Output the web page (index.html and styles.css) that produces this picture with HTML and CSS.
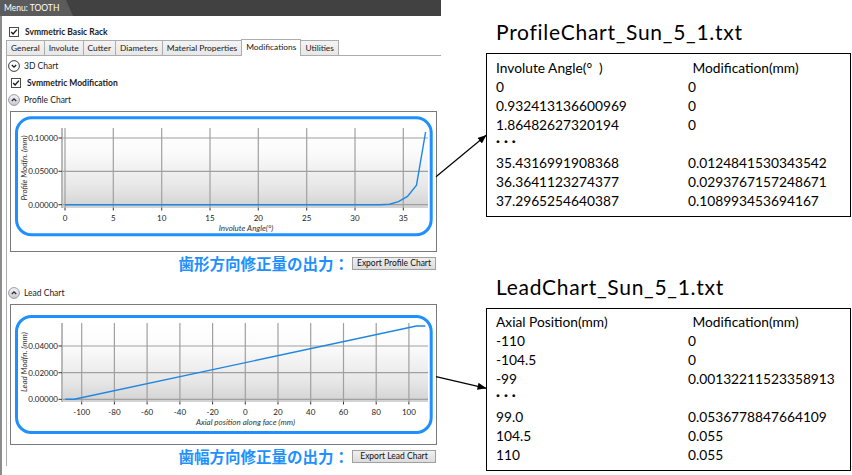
FILE: index.html
```html
<!DOCTYPE html>
<html lang="ja">
<head>
<meta charset="utf-8">
<title>TOOTH - Modifications</title>
<link rel="stylesheet" href="styles.css">
</head>
<body>
<div class="page">
  <section class="panel">
    <div class="menubar"><div class="menutab">Menu: TOOTH</div></div>
    <div class="panel-body">
      <div class="check-row top-check">
        <svg class="cb" width="10" height="10" viewBox="0 0 10 10"><rect x="0.5" y="0.5" width="9" height="9" fill="#fff" stroke="#4a4a4a"/><path d="M2.2 5 L4.1 7 L7.9 2.6" fill="none" stroke="#1a1a1a" stroke-width="1.4"/></svg>
        <span class="b">Svmmetric Basic Rack</span>
      </div>
      <div class="tabs">
        <span class="tab">General</span>
        <span class="tab">Involute</span>
        <span class="tab">Cutter</span>
        <span class="tab">Diameters</span>
        <span class="tab">Material Properties</span>
        <span class="tab active">Modifications</span>
        <span class="tab">Utilities</span>
      </div>
      <div class="tab-content">
        <div class="exp-row r3d">
          <svg class="exp" width="12" height="12" viewBox="0 0 12 12"><circle cx="6" cy="6" r="5.4" fill="#fff" stroke="#3a3a3a"/><path d="M3.8 5 L6 7.2 L8.2 5" fill="none" stroke="#1a1a1a" stroke-width="1.3"/></svg>
          <span>3D Chart</span>
        </div>
        <div class="check-row mod-check">
          <svg class="cb" width="10" height="10" viewBox="0 0 10 10"><rect x="0.5" y="0.5" width="9" height="9" fill="#fff" stroke="#4a4a4a"/><path d="M2.2 5 L4.1 7 L7.9 2.6" fill="none" stroke="#1a1a1a" stroke-width="1.4"/></svg>
          <span class="b">Svmmetric Modification</span>
        </div>
        <div class="exp-row">
          <svg class="exp" width="12" height="12" viewBox="0 0 12 12"><defs><linearGradient id="eg1" x1="0" y1="0" x2="0" y2="1"><stop offset="0" stop-color="#f4f4f8"/><stop offset="1" stop-color="#c8c8d2"/></linearGradient></defs><circle cx="6" cy="6" r="5.4" fill="url(#eg1)" stroke="#9a9aa6"/><path d="M3.8 7 L6 4.8 L8.2 7" fill="none" stroke="#2a2a2a" stroke-width="1.3"/></svg>
          <span>Profile Chart</span>
        </div>
        <div class="chart-box">
          <svg width="425" height="139" viewBox="0 0 425 139">
            <defs>
              <linearGradient id="pg1" x1="0" y1="0" x2="0" y2="1">
                <stop offset="0" stop-color="#ffffff"/>
                <stop offset="0.3" stop-color="#fbfbfb"/>
                <stop offset="0.75" stop-color="#e6e6e6"/>
                <stop offset="1" stop-color="#d2d2d2"/>
              </linearGradient>
            </defs>
            <g transform="translate(-11 -112)">
              <rect x="62" y="128" width="366" height="80" fill="url(#pg1)"/>
              <g class="grid">
                <line x1="65" y1="128" x2="65" y2="208"/>
                <line x1="113.3" y1="128" x2="113.3" y2="208"/>
                <line x1="161.7" y1="128" x2="161.7" y2="208"/>
                <line x1="210" y1="128" x2="210" y2="208"/>
                <line x1="258.3" y1="128" x2="258.3" y2="208"/>
                <line x1="306.7" y1="128" x2="306.7" y2="208"/>
                <line x1="355" y1="128" x2="355" y2="208"/>
                <line x1="403.3" y1="128" x2="403.3" y2="208"/>
                <line x1="62" y1="138" x2="428" y2="138"/>
                <line x1="62" y1="171.3" x2="428" y2="171.3"/>
                <line x1="62" y1="204.7" x2="428" y2="204.7"/>
              </g>
              <line class="axis" x1="62" y1="128" x2="62" y2="208"/>
              <g class="ticks">
                <line x1="58.5" y1="138" x2="62" y2="138"/>
                <line x1="58.5" y1="171.3" x2="62" y2="171.3"/>
                <line x1="58.5" y1="204.7" x2="62" y2="204.7"/>
                <line x1="65" y1="208" x2="65" y2="210.5"/>
                <line x1="113.3" y1="208" x2="113.3" y2="210.5"/>
                <line x1="161.7" y1="208" x2="161.7" y2="210.5"/>
                <line x1="210" y1="208" x2="210" y2="210.5"/>
                <line x1="258.3" y1="208" x2="258.3" y2="210.5"/>
                <line x1="306.7" y1="208" x2="306.7" y2="210.5"/>
                <line x1="355" y1="208" x2="355" y2="210.5"/>
                <line x1="403.3" y1="208" x2="403.3" y2="210.5"/>
              </g>
              <g class="tick-lbl" text-anchor="end">
                <text x="58" y="141">0.10000</text>
                <text x="58" y="174.3">0.05000</text>
                <text x="58" y="207.7">0.00000</text>
              </g>
              <g class="tick-lbl" text-anchor="middle">
                <text x="65" y="220.5">0</text>
                <text x="113.3" y="220.5">5</text>
                <text x="161.7" y="220.5">10</text>
                <text x="210" y="220.5">15</text>
                <text x="258.3" y="220.5">20</text>
                <text x="306.7" y="220.5">25</text>
                <text x="355" y="220.5">30</text>
                <text x="403.3" y="220.5">35</text>
              </g>
              <text class="axis-title" x="246" y="231" text-anchor="middle">Involute Angle(°)</text>
              <text class="axis-title" transform="translate(27 168) rotate(-90)" text-anchor="middle">Profile Modfn. (mm)</text>
              <polyline class="data" points="65,204.7 380.4,204.7 389.5,204.2 398.5,201.7 407.5,196.4 416.5,185.1 425.6,132"/>
              <rect class="hl" x="16.5" y="117.8" width="414.7" height="117" rx="15"/>
            </g>
          </svg>
        </div>
        <div class="export-row">
          <span class="note">歯形方向修正量の出力：</span>
          <button class="btn" type="button">Export Profile Chart</button>
        </div>
        <div class="exp-row lead-row">
          <svg class="exp" width="12" height="12" viewBox="0 0 12 12"><defs><linearGradient id="eg2" x1="0" y1="0" x2="0" y2="1"><stop offset="0" stop-color="#f4f4f8"/><stop offset="1" stop-color="#c8c8d2"/></linearGradient></defs><circle cx="6" cy="6" r="5.4" fill="url(#eg2)" stroke="#9a9aa6"/><path d="M3.8 7 L6 4.8 L8.2 7" fill="none" stroke="#2a2a2a" stroke-width="1.3"/></svg>
          <span>Lead Chart</span>
        </div>
        <div class="chart-box">
          <svg width="425" height="139" viewBox="0 0 425 139">
            <defs>
              <linearGradient id="pg2" x1="0" y1="0" x2="0" y2="1">
                <stop offset="0" stop-color="#ffffff"/>
                <stop offset="0.3" stop-color="#fbfbfb"/>
                <stop offset="0.75" stop-color="#e6e6e6"/>
                <stop offset="1" stop-color="#d2d2d2"/>
              </linearGradient>
            </defs>
            <g transform="translate(-11 -305)">
              <rect x="62" y="323" width="366" height="79" fill="url(#pg2)"/>
              <g class="grid">
                <line x1="81.7" y1="323" x2="81.7" y2="402"/>
                <line x1="114.4" y1="323" x2="114.4" y2="402"/>
                <line x1="147.1" y1="323" x2="147.1" y2="402"/>
                <line x1="179.9" y1="323" x2="179.9" y2="402"/>
                <line x1="212.6" y1="323" x2="212.6" y2="402"/>
                <line x1="245.3" y1="323" x2="245.3" y2="402"/>
                <line x1="278" y1="323" x2="278" y2="402"/>
                <line x1="310.7" y1="323" x2="310.7" y2="402"/>
                <line x1="343.5" y1="323" x2="343.5" y2="402"/>
                <line x1="376.2" y1="323" x2="376.2" y2="402"/>
                <line x1="408.9" y1="323" x2="408.9" y2="402"/>
                <line x1="62" y1="346" x2="428" y2="346"/>
                <line x1="62" y1="372.7" x2="428" y2="372.7"/>
                <line x1="62" y1="399.3" x2="428" y2="399.3"/>
              </g>
              <line class="axis" x1="62" y1="323" x2="62" y2="402"/>
              <g class="ticks">
                <line x1="58.5" y1="346" x2="62" y2="346"/>
                <line x1="58.5" y1="372.7" x2="62" y2="372.7"/>
                <line x1="58.5" y1="399.3" x2="62" y2="399.3"/>
                <line x1="81.7" y1="402" x2="81.7" y2="404.5"/>
                <line x1="114.4" y1="402" x2="114.4" y2="404.5"/>
                <line x1="147.1" y1="402" x2="147.1" y2="404.5"/>
                <line x1="179.9" y1="402" x2="179.9" y2="404.5"/>
                <line x1="212.6" y1="402" x2="212.6" y2="404.5"/>
                <line x1="245.3" y1="402" x2="245.3" y2="404.5"/>
                <line x1="278" y1="402" x2="278" y2="404.5"/>
                <line x1="310.7" y1="402" x2="310.7" y2="404.5"/>
                <line x1="343.5" y1="402" x2="343.5" y2="404.5"/>
                <line x1="376.2" y1="402" x2="376.2" y2="404.5"/>
                <line x1="408.9" y1="402" x2="408.9" y2="404.5"/>
              </g>
              <g class="tick-lbl" text-anchor="end">
                <text x="58" y="349">0.04000</text>
                <text x="58" y="375.7">0.02000</text>
                <text x="58" y="402.3">0.00000</text>
              </g>
              <g class="tick-lbl" text-anchor="middle">
                <text x="81.7" y="414.7">-100</text>
                <text x="114.4" y="414.7">-80</text>
                <text x="147.1" y="414.7">-60</text>
                <text x="179.9" y="414.7">-40</text>
                <text x="212.6" y="414.7">-20</text>
                <text x="245.3" y="414.7">0</text>
                <text x="278" y="414.7">20</text>
                <text x="310.7" y="414.7">40</text>
                <text x="343.5" y="414.7">60</text>
                <text x="376.2" y="414.7">80</text>
                <text x="408.9" y="414.7">100</text>
              </g>
              <text class="axis-title" x="245.5" y="425.3" text-anchor="middle">Axial position along face (mm)</text>
              <text class="axis-title" transform="translate(27 362) rotate(-90)" text-anchor="middle">Lead Modfn. (mm)</text>
              <polyline class="data" points="65.3,399.3 74.3,399.3 416.3,326 425.3,326"/>
              <rect class="hl" x="16.5" y="316.5" width="414.7" height="116" rx="15"/>
            </g>
          </svg>
        </div>
        <div class="export-row">
          <span class="note">歯幅方向修正量の出力：</span>
          <button class="btn" type="button">Export Lead Chart</button>
        </div>
      </div>
    </div>
  </section>

  <section class="files">
    <h2 class="file-title">ProfileChart_Sun_5_1.txt</h2>
    <div class="file-box">
      <div class="frow"><span>Involute Angle(°&nbsp;&nbsp;)</span><span class="c2h">Modification(mm)</span></div>
      <div class="frow"><span>0</span><span>0</span></div>
      <div class="frow"><span>0.932413136600969</span><span>0</span></div>
      <div class="frow"><span>1.86482627320194</span><span>0</span></div>
      <div class="frow dots"><span>···</span><span></span></div>
      <div class="frow"><span>35.4316991908368</span><span>0.0124841530343542</span></div>
      <div class="frow"><span>36.3641123274377</span><span>0.0293767157248671</span></div>
      <div class="frow"><span>37.2965254640387</span><span>0.108993453694167</span></div>
    </div>
    <h2 class="file-title lead-title">LeadChart_Sun_5_1.txt</h2>
    <div class="file-box box2">
      <div class="frow"><span>Axial Position(mm)</span><span class="c2h">Modification(mm)</span></div>
      <div class="frow"><span>-110</span><span>0</span></div>
      <div class="frow"><span>-104.5</span><span>0</span></div>
      <div class="frow"><span>-99</span><span>0.00132211523358913</span></div>
      <div class="frow dots"><span>···</span><span></span></div>
      <div class="frow"><span>99.0</span><span>0.0536778847664109</span></div>
      <div class="frow"><span>104.5</span><span>0.055</span></div>
      <div class="frow"><span>110</span><span>0.055</span></div>
    </div>
  </section>
</div>

<svg class="arrows" width="852" height="475" viewBox="0 0 852 475">
  <defs>
    <marker id="ah" viewBox="0 0 10 8" refX="10" refY="4" markerWidth="9" markerHeight="7.2" markerUnits="userSpaceOnUse" orient="auto">
      <path d="M0 0 L10 4 L0 8 Z" fill="#000"/>
    </marker>
  </defs>
  <line x1="436" y1="176.7" x2="486.5" y2="135" stroke="#000" stroke-width="1.2" marker-end="url(#ah)"/>
  <line x1="436" y1="376.7" x2="486.5" y2="388.3" stroke="#000" stroke-width="1.2" marker-end="url(#ah)"/>
</svg>
</body>
</html>
```

FILE: styles.css
```css
* { box-sizing: border-box; }
html, body { margin: 0; padding: 0; }
body {
  width: 852px;
  height: 475px;
  overflow: hidden;
  background: #fff;
  font-family: Lato, "Noto Sans", sans-serif;
  color: #1a1a1a;
  position: relative;
}
.page { display: flex; align-items: flex-start; height: 475px; }

/* left application panel */
.panel { width: 441px; height: 475px; display: flex; flex-direction: column; flex: none; }
.menubar { height: 16px; background: #414141; flex: none; }
.menutab {
  width: 73px;
  height: 16px;
  background: #5b5b5b;
  clip-path: polygon(0 0, 66px 0, 73px 100%, 0 100%);
  color: #fff;
  font-size: 8.5px;
  line-height: 16px;
  padding-left: 4px;
}
.panel-body { flex: 1; border-left: 2px solid #8c8c8c; }
.check-row { display: flex; align-items: center; gap: 6px; font-size: 8.5px; }
.cb { flex: none; display: block; }
.b { font-weight: 700; }
.top-check { height: 24px; padding: 7px 0 0 7px; }

.tabs { display: flex; align-items: flex-end; height: 15px; margin-left: 4px; }
.tab {
  height: 15px;
  padding: 0 4px;
  border: 1px solid #acacac;
  border-bottom: none;
  background: linear-gradient(#f4f4f4, #e7e7e7);
  font-size: 8.4px;
  line-height: 14px;
  margin-right: -1px;
  white-space: nowrap;
}
.tab.active {
  height: 17px;
  margin-bottom: -1px;
  background: #fff;
  position: relative;
  z-index: 1;
  line-height: 15px;
}
.tab-content {
  margin-left: 4px;
  border-top: 1px solid #acacac;
  border-left: 1px solid #acacac;
  padding-top: 2px;
}
.exp-row { display: flex; align-items: center; gap: 4.5px; height: 16px; padding-left: 0.5px; font-size: 8.5px; }
.exp { flex: none; display: block; }
.r3d { height: 15px; }
.mod-check { height: 19px; padding-left: 4px; }

.chart-box {
  margin: 3px 0 0 3px;
  width: 427px;
  height: 141px;
  border: 1px solid #7a7a7a;
  background: #fff;
}
.chart-box svg { display: block; }
.grid line { stroke: #a0a0a0; stroke-width: 1.2; }
.axis { stroke: #b8b8b8; stroke-width: 2; }
.ticks line { stroke: #333; stroke-width: 1; }
.tick-lbl { font-family: Lato, sans-serif; font-size: 8px; fill: #222; }
.axis-title { font-family: Lato, sans-serif; font-size: 8px; font-style: italic; fill: #333; }
.data { fill: none; stroke: #1f86df; stroke-width: 1.4; }
.hl { fill: none; stroke: #1e90ff; stroke-width: 3; }

.export-row {
  display: flex;
  justify-content: flex-end;
  align-items: center;
  gap: 3px;
  height: 20px;
  margin-top: 1px;
  padding-right: 5px;
}
.note {
  font-family: "Noto Sans CJK JP", sans-serif;
  font-size: 15.5px;
  font-weight: 700;
  color: #1e90ff;
  line-height: 20px;
  white-space: nowrap;
}
.btn {
  width: 84px;
  height: 13px;
  padding: 0;
  border: 1px solid #a0a0a0;
  background: linear-gradient(#f0f0f0, #dcdcdc);
  font-family: Lato, sans-serif;
  font-size: 8.5px;
  color: #111;
  line-height: 11px;
  white-space: nowrap;
}
.lead-row { margin-top: 12px; }

/* right side: exported text files */
.files { width: 365px; margin-left: 45px; padding-top: 19.5px; color: #000; flex: none; }
.file-title {
  margin: 0 0 9px;
  padding-left: 10px;
  font-size: 21px;
  letter-spacing: 0.72px;
  font-weight: 400;
  line-height: 24px;
}
.lead-title { margin-top: 58px; }
.file-box {
  border: 1px solid #000;
  padding: 4px 0 6px 9px;
  font-size: 13.75px;
  line-height: 19px;
}
.box2 { padding-top: 3.5px; }
.frow { display: grid; grid-template-columns: 192px 1fr; white-space: nowrap; }
.c2h { padding-left: 4.5px; }
.dots { height: 19px; }
.dots span:first-child {
  display: block;
  margin-top: -1px;
  font-weight: 900;
  font-size: 14px;
  line-height: 16.8px;
  letter-spacing: 4px;
}

.arrows { position: absolute; left: 0; top: 0; pointer-events: none; }
```
